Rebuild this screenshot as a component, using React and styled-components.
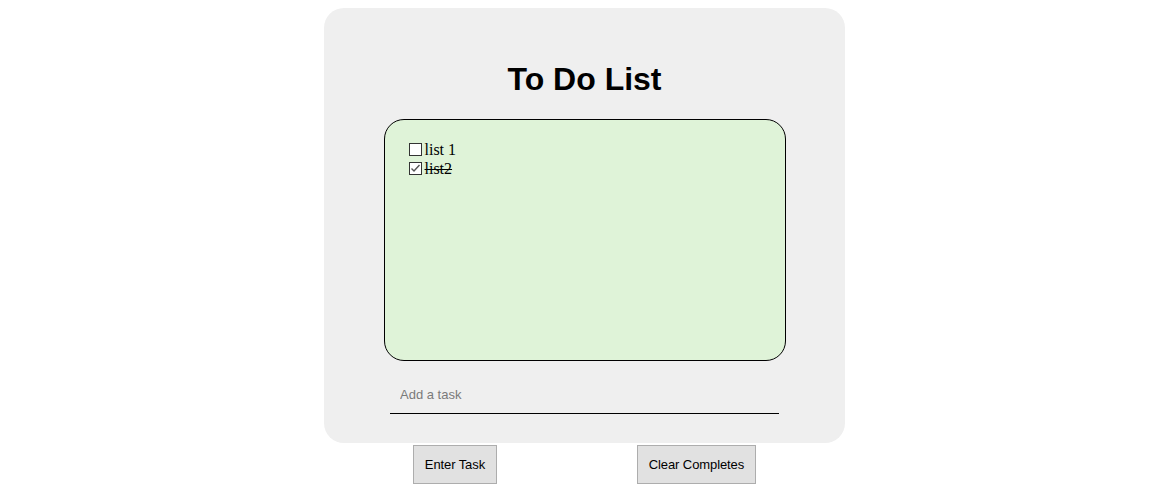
import React, { useState } from 'react';
import styled, { createGlobalStyle } from 'styled-components';

const GlobalStyle = createGlobalStyle`
  body {
    margin: 8px;
    background: #ffffff;
    font-family: "Liberation Serif", serif;
  }
`

const Page = styled.div`
  display: flex;
  flex-direction: column;
  align-items: center;
`

const Card = styled.div`
  width: 521px;
  height: 435px;
  box-sizing: border-box;
  padding-top: 53px;
  background-color: #efefef;
  border-radius: 20px;
  display: flex;
  flex-direction: column;
  align-items: center;
`

const Title = styled.h1`
  margin: 0 0 21px;
  font-family: "Liberation Sans", Arial, sans-serif;
  font-size: 32px;
  font-weight: bold;
  color: #000;
`

const ListBox = styled.div`
  width: 402px;
  height: 242px;
  box-sizing: border-box;
  padding: 20px 20px;
  border: 1px solid #000;
  border-radius: 20px;
  background-color: #dff3d8;
`

const Item = styled.label`
  display: flex;
  align-items: center;
  height: 19px;
  font-size: 16px;
  color: #000;
  text-decoration: ${(p) => (p.$done ? 'line-through' : 'none')};
  cursor: pointer;
`

const HiddenInput = styled.input`
  display: none;
`

const Box = styled.span`
  display: inline-flex;
  align-items: center;
  justify-content: center;
  width: 13px;
  height: 13px;
  box-sizing: border-box;
  margin: 0 3px 0 4px;
  border: 1px solid #333;
  background: #fff;
`

const TaskInput = styled.input`
  margin-top: 22px;
  width: 389px;
  height: 31px;
  box-sizing: border-box;
  padding: 0 10px 7px;
  border: none;
  border-bottom: 1px solid #000;
  background: transparent;
  font-family: "Liberation Sans", Arial, sans-serif;
  font-size: 13px;
  outline: none;

  &::placeholder {
    color: #7a7a7a;
  }
`

const ButtonRow = styled.div`
  width: 483px;
  margin-top: 2px;
  display: flex;
  justify-content: space-around;
`

const Button = styled.button`
  height: 39px;
  padding: 0 11px;
  border: 1px solid #adadad;
  border-radius: 0;
  background-color: #e1e1e1;
  font-family: "Liberation Sans", Arial, sans-serif;
  font-size: 13px;
  letter-spacing: -0.1px;
  color: #000;
`

function Check({ checked }) {
  return (
    <Box>
      {checked && (
        <svg width="11" height="11" viewBox="0 0 11 11">
          <path d="M1.5 5.5 L4 8 L9.5 2" fill="none" stroke="#555" strokeWidth="1.4" />
        </svg>
      )}
    </Box>
  );
}

export default function App() {
  const [tasks, setTasks] = useState([
    { text: 'list 1', done: false },
    { text: 'list2', done: true },
  ]);

  const toggle = (i) => {
    setTasks(tasks.map((t, j) => (j === i ? { ...t, done: !t.done } : t)));
  };

  return (
    <Page>
      <GlobalStyle />
      <Card>
        <Title>To Do List</Title>
        <ListBox>
          {tasks.map((t, i) => (
            <Item key={i} $done={t.done}>
              <HiddenInput type="checkbox" checked={t.done} onChange={() => toggle(i)} />
              <Check checked={t.done} />
              {t.text}
            </Item>
          ))}
        </ListBox>
        <TaskInput placeholder="Add a task" />
      </Card>
      <ButtonRow>
        <Button>Enter Task</Button>
        <Button>Clear Completes</Button>
      </ButtonRow>
    </Page>
  );
}
